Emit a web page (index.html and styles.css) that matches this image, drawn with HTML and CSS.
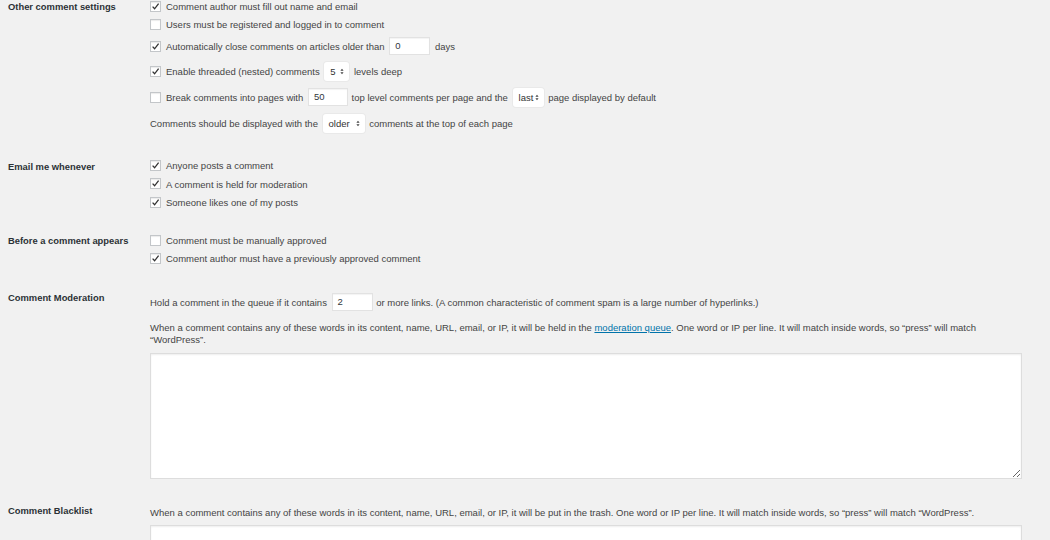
FILE: index.html
```html
<!DOCTYPE html>
<html>
<head>
<meta charset="utf-8">
<link rel="stylesheet" href="styles.css">
</head>
<body>
<div class="page">

  <div class="section s1">
    <div class="label">Other comment settings</div>
    <div class="content">
      <div class="row crow"><span class="cb on"><svg viewBox="0 0 11 11"><path d="M2.6 5.6 L4.6 7.8 L8.6 2.6" /></svg></span>Comment author must fill out name and email</div>
      <div class="row crow"><span class="cb"></span>Users must be registered and logged in to comment</div>
      <div class="row frow r3"><span class="cb on"><svg viewBox="0 0 11 11"><path d="M2.6 5.6 L4.6 7.8 L8.6 2.6" /></svg></span>Automatically close comments on articles older than <span class="inp">0</span> <span class="after">days</span></div>
      <div class="row frow"><span class="cb on"><svg viewBox="0 0 11 11"><path d="M2.6 5.6 L4.6 7.8 L8.6 2.6" /></svg></span>Enable threaded (nested) comments <span class="sel w25">5<svg class="arr" viewBox="0 0 5 8"><path d="M2.5 0.5 L4.5 3 L0.5 3 Z M0.5 5 L4.5 5 L2.5 7.5 Z"/></svg></span> levels deep</div>
      <div class="row frow"><span class="cb"></span>Break comments into pages with <span class="inp w40">50</span> top level comments per page and the <span class="sel w31">last<svg class="arr" viewBox="0 0 5 8"><path d="M2.5 0.5 L4.5 3 L0.5 3 Z M0.5 5 L4.5 5 L2.5 7.5 Z"/></svg></span> page displayed by default</div>
      <div class="row frow">Comments should be displayed with the <span class="sel w42">older<svg class="arr" viewBox="0 0 5 8"><path d="M2.5 0.5 L4.5 3 L0.5 3 Z M0.5 5 L4.5 5 L2.5 7.5 Z"/></svg></span> comments at the top of each page</div>
    </div>
  </div>

  <div class="section s2">
    <div class="label lab2">Email me whenever</div>
    <div class="content">
      <div class="row crow"><span class="cb on"><svg viewBox="0 0 11 11"><path d="M2.6 5.6 L4.6 7.8 L8.6 2.6" /></svg></span>Anyone posts a comment</div>
      <div class="row crow c2"><span class="cb on"><svg viewBox="0 0 11 11"><path d="M2.6 5.6 L4.6 7.8 L8.6 2.6" /></svg></span>A comment is held for moderation</div>
      <div class="row crow c2"><span class="cb on"><svg viewBox="0 0 11 11"><path d="M2.6 5.6 L4.6 7.8 L8.6 2.6" /></svg></span>Someone likes one of my posts</div>
    </div>
  </div>

  <div class="section s3">
    <div class="label">Before a comment appears</div>
    <div class="content">
      <div class="row crow"><span class="cb"></span>Comment must be manually approved</div>
      <div class="row crow"><span class="cb on"><svg viewBox="0 0 11 11"><path d="M2.6 5.6 L4.6 7.8 L8.6 2.6" /></svg></span>Comment author must have a previously approved comment</div>
    </div>
  </div>

  <div class="section s4">
    <div class="label">Comment Moderation</div>
    <div class="content pad2">
      <div class="row frow">Hold a comment in the queue if it contains <span class="inp">2</span> or more links. (A common characteristic of comment spam is a large number of hyperlinks.)</div>
      <p class="desc">When a comment contains any of these words in its content, name, URL, email, or IP, it will be held in the <a href="#">moderation queue</a>. One word or IP per line. It will match inside words, so “press” will match “WordPress”.</p>
      <textarea class="ta"></textarea>
    </div>
  </div>

  <div class="section s5">
    <div class="label">Comment Blacklist</div>
    <div class="content pad2">
      <p class="desc one">When a comment contains any of these words in its content, name, URL, email, or IP, it will be put in the trash. One word or IP per line. It will match inside words, so “press” will match “WordPress”.</p>
      <textarea class="ta ta2"></textarea>
    </div>
  </div>

</div>
</body>
</html>
```

FILE: styles.css
```css
html, body {
  margin: 0;
  padding: 0;
  background: #f1f1f1;
  overflow: hidden;
}
body {
  font-family: "Liberation Sans", Arial, sans-serif;
  font-size: 9.5px;
  color: #444;
}
.page {
  padding-left: 8px;
}
.section {
  display: flex;
  align-items: flex-start;
}
.label {
  width: 142px;
  flex: none;
  font-weight: bold;
  font-size: 9.4px;
  color: #2c3136;
  line-height: 14px;
}
.lab2 { padding-top: 1px; }
.content {
  width: 872px;
  flex: none;
}
.pad2 { padding-top: 2px; }
.s2 { margin-top: 25px; }
.s3 { margin-top: 24px; }
.s4 { margin-top: 25px; }
.s5 { margin-top: 25px; }

.row {
  white-space: nowrap;
}
.crow {
  height: 14px;
  line-height: 14px;
  margin-top: 4px;
}
.crow:first-child { margin-top: 0; }
.c2 { margin-top: 4.5px; }
.frow {
  height: 20px;
  line-height: 20px;
  margin-top: 6px;
}
.r3 { height: 18px; line-height: 18px; }
.frow:first-child { margin-top: 0; }

.cb {
  display: inline-block;
  box-sizing: border-box;
  width: 11px;
  height: 11px;
  border: 1px solid #c3c6c9;
  background: #fff;
  box-shadow: inset 0 1px 1px rgba(0,0,0,.08);
  vertical-align: middle;
  margin: -2px 5px 0 0;
  position: relative;
}
.cb svg {
  position: absolute;
  left: -1px;
  top: -1px;
  width: 11px;
  height: 11px;
}
.cb path {
  fill: none;
  stroke: #333;
  stroke-width: 1.3;
}
.inp {
  display: inline-block;
  box-sizing: border-box;
  width: 41px;
  height: 18px;
  line-height: 16px;
  padding-left: 5px;
  background: #fff;
  border: 1px solid #e2e2e2;
  box-shadow: inset 0 1px 1px rgba(0,0,0,.05);
  vertical-align: middle;
  margin: -2px 1px 0 2px;
  color: #32373c;
}
.w40 { width: 40px; }
.after { margin-left: 1px; }
.sel {
  display: inline-block;
  box-sizing: border-box;
  height: 19px;
  line-height: 19px;
  padding-left: 6px;
  background: #fff;
  border-radius: 3px;
  box-shadow: 0 0 0 1px rgba(0,0,0,.03);
  vertical-align: middle;
  margin: -2px 2px 0 2px;
  position: relative;
  color: #333;
}
.w25 { width: 25px; }
.w31 { width: 31px; }
.w42 { width: 42px; }
.arr {
  position: absolute;
  right: 5px;
  top: 6px;
  width: 4px;
  height: 7px;
}
.arr path { fill: #444; }

.desc {
  margin: 9px 0 0 0;
  line-height: 12px;
  width: 872px;
}
.desc a {
  color: #0073aa;
  text-decoration: underline;
}
.desc.one {
  margin-top: 0;
  line-height: 14px;
}
.ta {
  display: block;
  box-sizing: border-box;
  width: 872px;
  height: 126px;
  margin-top: 7px;
  background: #fff;
  border: 1px solid #ddd;
  box-shadow: inset 0 1px 2px rgba(0,0,0,.07);
  padding: 0;
  font: inherit;
}
.ta2 {
  margin-top: 5px;
}
```
